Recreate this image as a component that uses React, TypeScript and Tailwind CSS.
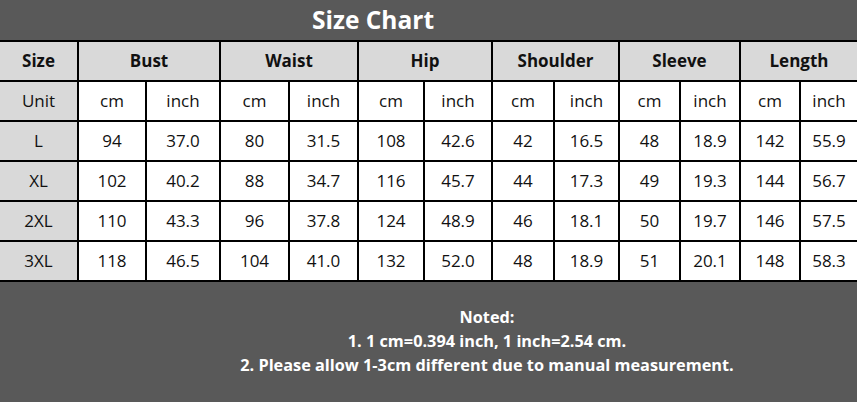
import React from 'react';

const units = ['Bust', 'Waist', 'Hip', 'Shoulder', 'Sleeve', 'Length'];

const rows: string[][] = [
  ['L', '94', '37.0', '80', '31.5', '108', '42.6', '42', '16.5', '48', '18.9', '142', '55.9'],
  ['XL', '102', '40.2', '88', '34.7', '116', '45.7', '44', '17.3', '49', '19.3', '144', '56.7'],
  ['2XL', '110', '43.3', '96', '37.8', '124', '48.9', '46', '18.1', '50', '19.7', '146', '57.5'],
  ['3XL', '118', '46.5', '104', '41.0', '132', '52.0', '48', '18.9', '51', '20.1', '148', '58.3'],
];

const font = { fontFamily: '"Open Sans", "Noto Sans", sans-serif' };

const App: React.FC = () => {
  return (
    <div className="w-[857px] h-[402px] bg-[#595959] overflow-hidden" style={font}>
      <div className="h-[40px] pl-[312px] flex items-center text-white font-bold text-[24.5px] leading-none">
        Size Chart
      </div>
      <div className="grid grid-cols-[77px_66px_72px_67px_67px_64px_66px_60px_63px_59px_58px_58px_56px] auto-rows-[38px] gap-[2px] bg-black pt-[2px] pb-[2px] text-[17px] text-[#111]">
        <div className="bg-[#d9d9d9] flex items-center justify-center font-bold">Size</div>
        {units.map((u) => (
          <div key={u} className="col-span-2 bg-[#d9d9d9] flex items-center justify-center font-bold">
            {u}
          </div>
        ))}
        <div className="bg-[#d9d9d9] flex items-center justify-center">Unit</div>
        {units.map((u) => (
          <React.Fragment key={u}>
            <div className="bg-white flex items-center justify-center">cm</div>
            <div className="bg-white flex items-center justify-center">inch</div>
          </React.Fragment>
        ))}
        {rows.map((r) =>
          r.map((v, i) => (
            <div
              key={r[0] + i}
              className={
                i === 0
                  ? 'bg-[#d9d9d9] flex items-center justify-center'
                  : 'bg-white flex items-center justify-center'
              }
            >
              {v}
            </div>
          ))
        )}
      </div>
      <div className="pl-[117px] pt-[23px] text-center text-white font-bold text-[16.3px] leading-[24px]">
        <p>Noted:</p>
        <p>1. 1 cm=0.394 inch, 1 inch=2.54 cm.</p>
        <p>2. Please allow 1-3cm different due to manual measurement.</p>
      </div>
    </div>
  );
};

export default App;
